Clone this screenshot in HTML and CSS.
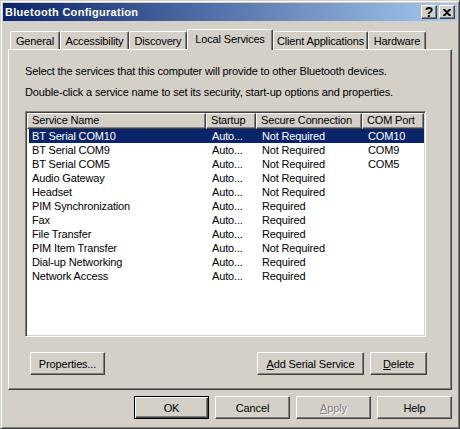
FILE: index.html
```html
<!DOCTYPE html>
<html>
<head>
<meta charset="utf-8">
<link rel="stylesheet" href="styles.css">
</head>
<body>
<div class="window">
  <div class="titlebar">
    <span class="title">Bluetooth Configuration</span>
    <div class="cap-btns">
      <div class="cap-btn help">?</div>
      <div class="cap-btn">
        <svg width="8" height="7" viewBox="0 0 8 7"><path d="M0 0h2l2 2 2-2h2v1L5 3.5 8 6v1H6L4 5 2 7H0V6l3-2.5L0 1z" fill="#000"/></svg>
      </div>
    </div>
  </div>
  <div class="body">
    <div class="tabs">
      <div class="tab w-general">General</div>
      <div class="tab w-access">Accessibility</div>
      <div class="tab w-disc">Discovery</div>
      <div class="tab selected w-local">Local Services</div>
      <div class="tab w-client">Client Applications</div>
      <div class="tab w-hw">Hardware</div>
    </div>
    <div class="panel">
      <p class="line first">Select the services that this computer will provide to other Bluetooth devices.</p>
      <p class="line second">Double-click a service name to set its security, start-up options and properties.</p>
      <div class="listview">
        <div class="lv-header">
          <div class="hcell">Service Name</div>
          <div class="hcell">Startup</div>
          <div class="hcell">Secure Connection</div>
          <div class="hcell">COM Port</div>
        </div>
        <div class="lv-rows">
          <div class="row sel"><span>BT Serial COM10</span><span>Auto...</span><span>Not Required</span><span>COM10</span></div>
          <div class="row"><span>BT Serial COM9</span><span>Auto...</span><span>Not Required</span><span>COM9</span></div>
          <div class="row"><span>BT Serial COM5</span><span>Auto...</span><span>Not Required</span><span>COM5</span></div>
          <div class="row"><span>Audio Gateway</span><span>Auto...</span><span>Not Required</span><span></span></div>
          <div class="row"><span>Headset</span><span>Auto...</span><span>Not Required</span><span></span></div>
          <div class="row"><span>PIM Synchronization</span><span>Auto...</span><span>Required</span><span></span></div>
          <div class="row"><span>Fax</span><span>Auto...</span><span>Required</span><span></span></div>
          <div class="row"><span>File Transfer</span><span>Auto...</span><span>Required</span><span></span></div>
          <div class="row"><span>PIM Item Transfer</span><span>Auto...</span><span>Not Required</span><span></span></div>
          <div class="row"><span>Dial-up Networking</span><span>Auto...</span><span>Required</span><span></span></div>
          <div class="row"><span>Network Access</span><span>Auto...</span><span>Required</span><span></span></div>
        </div>
      </div>
      <div class="panel-buttons">
        <div class="btn w-props">Properties...</div>
        <div class="spacer"></div>
        <div class="btn w-add"><u>A</u>dd Serial Service</div>
        <div class="btn w-del"><u>D</u>elete</div>
      </div>
    </div>
    <div class="dialog-buttons">
      <div class="btn default">OK</div>
      <div class="btn">Cancel</div>
      <div class="btn disabled"><u>A</u>pply</div>
      <div class="btn">Help</div>
    </div>
  </div>
</div>
</body>
</html>
```
FILE: styles.css
```css
* { box-sizing: border-box; }
html, body { margin: 0; padding: 0; }
body {
  width: 460px;
  height: 429px;
  background: #D4D0C8;
  font-family: "Liberation Sans", Arial, sans-serif;
  font-size: 11px;
  letter-spacing: -0.15px;
  color: #000;
  overflow: hidden;
}
.window {
  width: 460px;
  height: 429px;
  border: 1px solid;
  border-color: #D4D0C8 #404040 #404040 #D4D0C8;
  box-shadow: inset 1px 1px #fff, inset -1px -1px #808080;
  padding: 2px;
  display: flex;
  flex-direction: column;
  background: #D4D0C8;
}
.titlebar {
  height: 18px;
  flex: 0 0 18px;
  background: linear-gradient(to right, #0A246A, #A6CAF0);
  display: flex;
  align-items: center;
  padding: 0 2px 0 2px;
}
.title {
  flex: 1;
  color: #fff;
  font-weight: bold;
  font-size: 11px;
  letter-spacing: 0.3px;
  line-height: 18px;
}
.cap-btns { display: flex; gap: 2px; }
.cap-btn {
  width: 16px;
  height: 14px;
  border: 1px solid;
  border-color: #fff #404040 #404040 #fff;
  box-shadow: inset -1px -1px #808080;
  background: #D4D0C8;
  display: flex;
  align-items: center;
  justify-content: center;
}
.cap-btn.help {
  font-weight: bold;
  font-size: 14px;
  line-height: 12px;
  letter-spacing: 0;
}
.body {
  flex: 1;
  display: flex;
  flex-direction: column;
  padding: 8px 5px 0 5px;
}
.tabs {
  height: 20px;
  display: flex;
  align-items: flex-end;
  padding-left: 2px;
}
.tab {
  height: 18px;
  border-top: 1px solid #fff;
  border-left: 1px solid #fff;
  border-right: 1px solid #404040;
  box-shadow: inset -1px 0 #808080;
  border-top-left-radius: 2px;
  border-top-right-radius: 2px;
  text-align: center;
  padding-top: 1px;
  line-height: 17px;
  white-space: nowrap;
}
.tab.selected {
  height: 21px;
  margin-bottom: -1px;
  position: relative;
  z-index: 1;
  background: #D4D0C8;
  padding-top: 0;
  line-height: 18px;
}
.w-general { width: 50px; }
.w-access { width: 69px; }
.w-disc { width: 58px; }
.w-local { width: 86px; }
.w-client { width: 95px; }
.w-hw { width: 58px; }
.panel {
  height: 341px;
  flex: 0 0 341px;
  border: 1px solid;
  border-color: #fff #404040 #404040 #fff;
  box-shadow: inset -1px -1px #808080;
  padding: 15px 24px 0 16px;
  display: flex;
  flex-direction: column;
}
.line {
  margin: 0;
  line-height: 13px;
  white-space: nowrap;
}
.line.second { margin-top: 8px; }
.listview {
  margin-top: 12px;
  width: 401px;
  height: 226px;
  border: 1px solid;
  border-color: #808080 #fff #fff #808080;
  box-shadow: inset 1px 1px #404040, inset -1px -1px #D4D0C8;
  padding: 1px;
  background: #fff;
  display: flex;
  flex-direction: column;
}
.lv-header {
  display: grid;
  grid-template-columns: 179px 50px 106px 62px;
  height: 16px;
}
.hcell {
  border: 1px solid;
  border-color: #fff #404040 #404040 #fff;
  box-shadow: inset -1px -1px #808080;
  background: #D4D0C8;
  padding-left: 4px;
  line-height: 13px;
  white-space: nowrap;
}
.lv-rows { display: flex; flex-direction: column; }
.row {
  display: grid;
  grid-template-columns: 177px 50px 106px 62px;
  margin-left: 2px;
  height: 14px;
  line-height: 14px;
  white-space: nowrap;
}
.row span { padding-left: 6px; overflow: hidden; }
.row span:first-child { padding-left: 3px; }
.row.sel { background: #0A246A; color: #fff; }
.panel-buttons {
  margin-top: 15px;
  display: flex;
  gap: 6px;
  padding-left: 5px;
}
.spacer { flex: 1; }
.btn {
  height: 23px;
  width: 75px;
  border: 1px solid;
  border-color: #fff #404040 #404040 #fff;
  box-shadow: inset -1px -1px #808080;
  background: #D4D0C8;
  display: flex;
  align-items: center;
  justify-content: center;
  white-space: nowrap;
}
.w-props { width: 75px; }
.w-add { width: 107px; }
.w-del { width: 57px; }
.btn.default {
  border-color: #000;
  box-shadow: inset 1px 1px #fff, inset -1px -1px #404040, inset -2px -2px #808080;
}
.btn.disabled {
  color: #808080;
  text-shadow: 1px 1px #fff;
}
.dialog-buttons {
  margin-top: 6px;
  display: flex;
  justify-content: flex-end;
  gap: 6px;
}
```
